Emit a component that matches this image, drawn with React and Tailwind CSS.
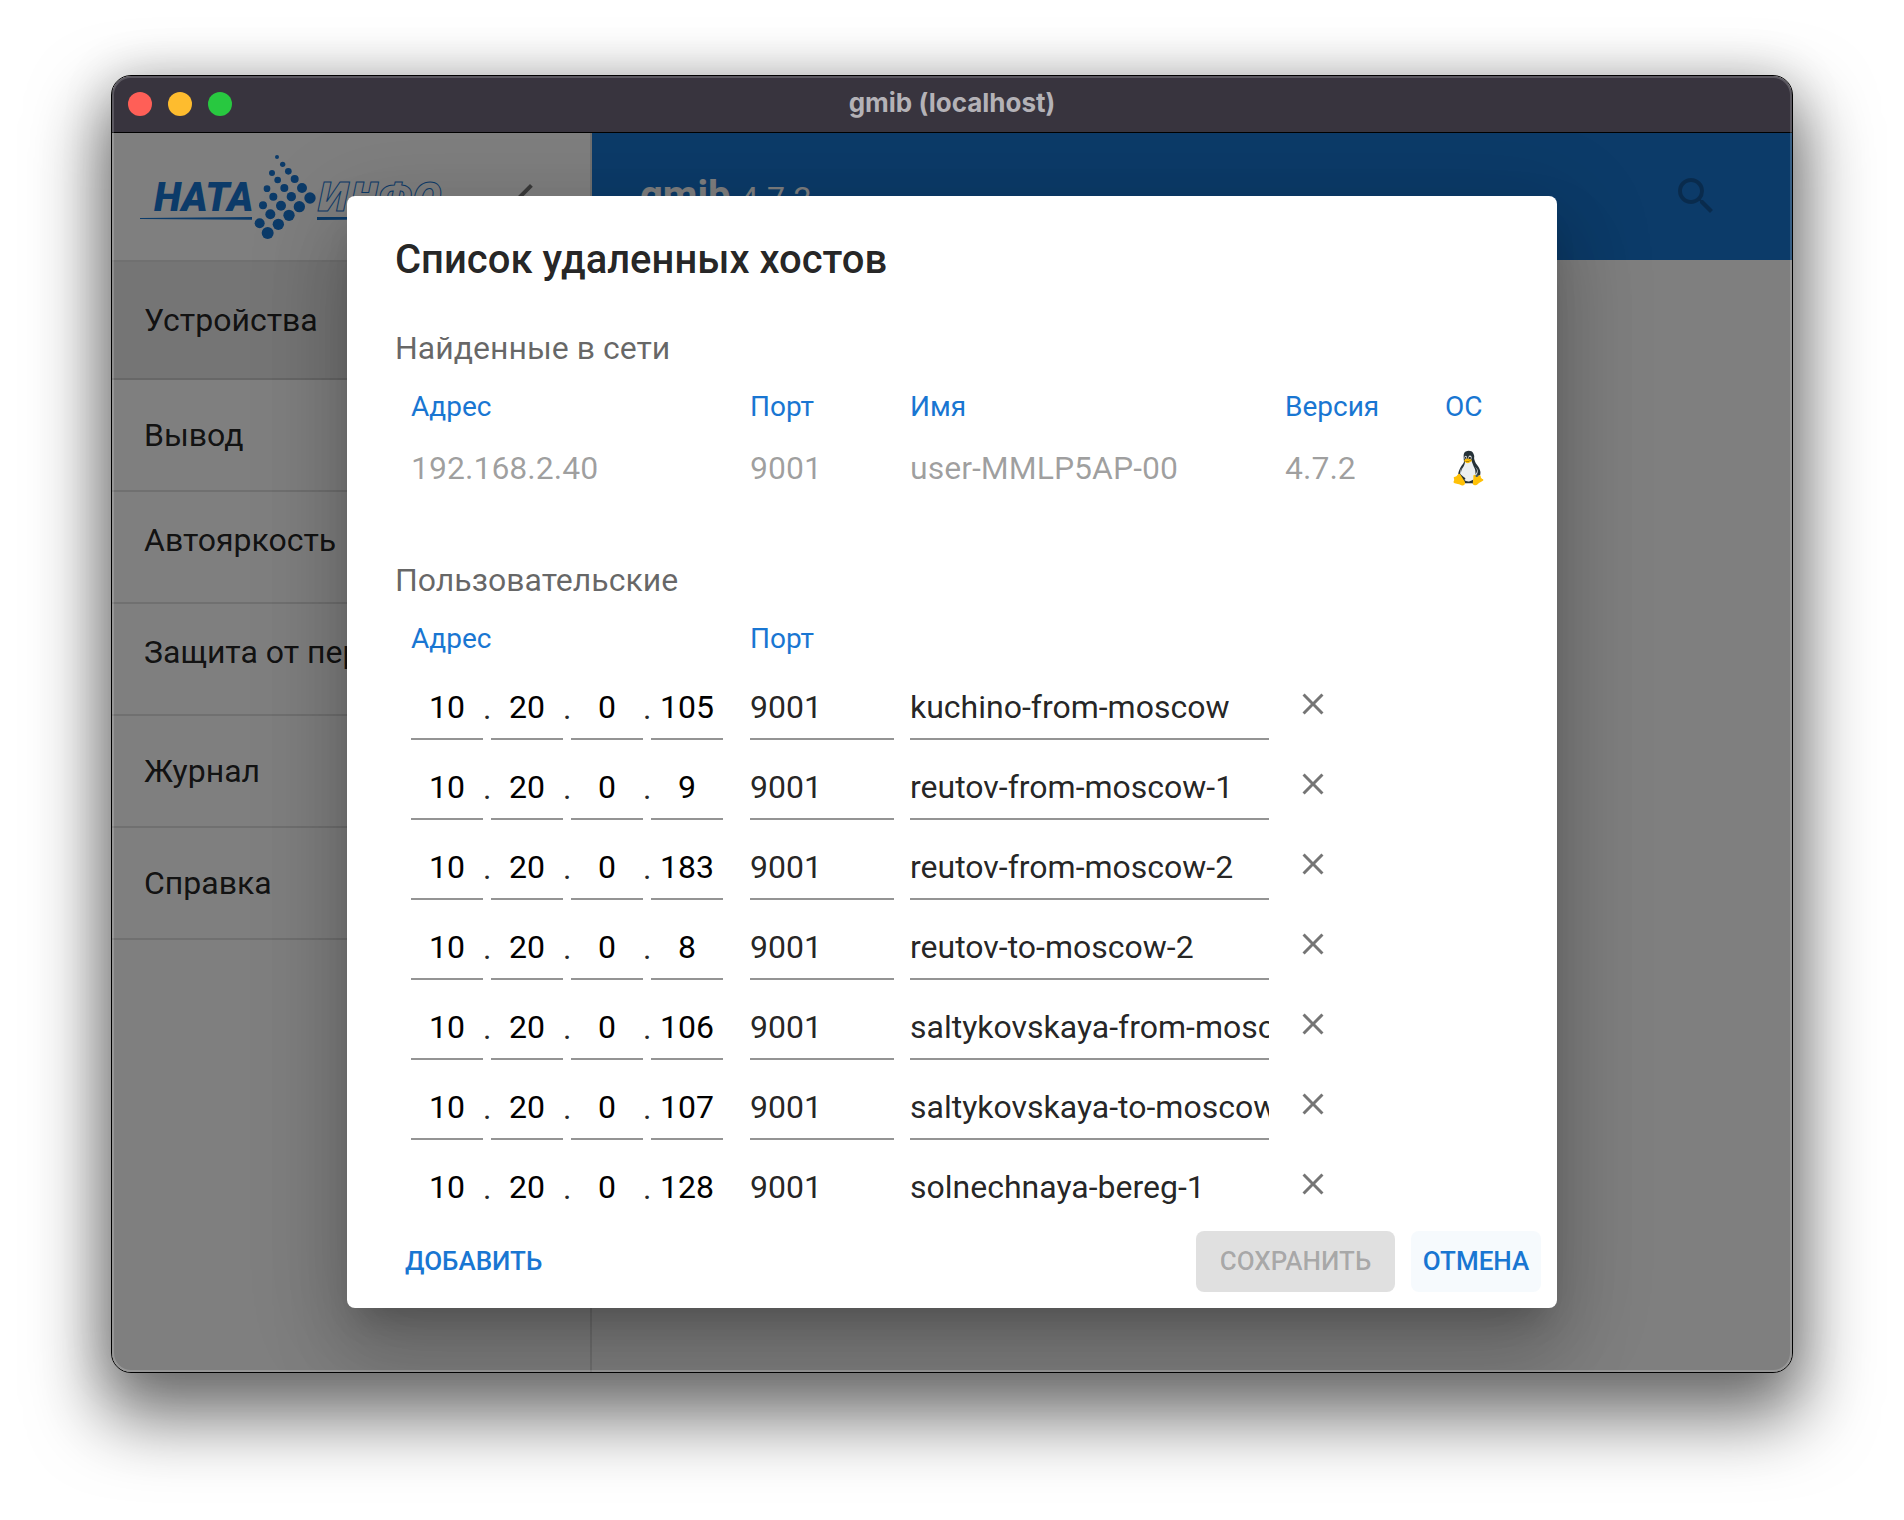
import React, { useState } from 'react';
import { MdChevronLeft, MdClose, MdSearch } from 'react-icons/md';
import { FcLinux } from 'react-icons/fc';

const MENU = [
  { title: 'Устройства', selected: true },
  { title: 'Вывод' },
  { title: 'Автояркость', raised: true },
  { title: 'Защита от перегрева', raised: true },
  { title: 'Журнал' },
  { title: 'Справка' },
];

const FOUND_HOSTS = [
  { address: '192.168.2.40', port: 9001, name: 'user-MMLP5AP-00', version: '4.7.2' },
];

const CUSTOM_HOSTS = [
  { id: 1, address: '10.20.0.105', port: '9001', name: 'kuchino-from-moscow' },
  { id: 2, address: '10.20.0.9', port: '9001', name: 'reutov-from-moscow-1' },
  { id: 3, address: '10.20.0.183', port: '9001', name: 'reutov-from-moscow-2' },
  { id: 4, address: '10.20.0.8', port: '9001', name: 'reutov-to-moscow-2' },
  { id: 5, address: '10.20.0.106', port: '9001', name: 'saltykovskaya-from-moscow' },
  { id: 6, address: '10.20.0.107', port: '9001', name: 'saltykovskaya-to-moscow' },
  { id: 7, address: '10.20.0.128', port: '9001', name: 'solnechnaya-bereg-1' },
];

// [cx, cy, r]
const LOGO_DOTS = [
  [441, 48, 6], [458, 70, 8], [475, 91, 10], [494, 114, 12], [516, 141, 15], [540, 171, 17],
  [426, 96, 9], [443, 117, 10], [463, 141, 12], [484, 167, 14], [508, 197, 17],
  [411, 143, 10], [430, 167, 12], [453, 194, 15], [477, 223, 17],
  [399, 193, 12], [421, 220, 15], [445, 250, 17],
  [389, 247, 15], [413, 276, 18],
];

function Logo() {
  return (
    <svg viewBox="30 30 990 270" className="w-[330px] h-[90px] shrink-0" fill="#1976d2" role="img" aria-label="НАТА-ИНФО">
      <text x="72" y="210" fontFamily="Roboto, sans-serif" fontSize="119" fontWeight="900" fontStyle="italic">НАТА</text>
      <path d="M30 231 L366 228 V236 L30 234 Z" />
      {LOGO_DOTS.map(([cx, cy, r]) => (
        <circle key={`${cx}-${cy}`} cx={cx} cy={cy} r={r} />
      ))}
      <text
        x="562"
        y="210"
        fontFamily="Open Sans, sans-serif"
        fontSize="121"
        fontWeight="800"
        fontStyle="italic"
        fill="none"
        stroke="#1976d2"
        strokeWidth="3"
      >
        ИНФО
      </text>
      <path d="M561 228 H960 V233 L561 237 Z" />
    </svg>
  );
}

function TitleBar() {
  return (
    <div className="relative z-10 grid grid-cols-[1fr_auto_1fr] items-center h-14 shrink-0 px-4 bg-[#38343e] shadow-[0_1px_0_#000]">
      <div className="flex gap-4">
        <button type="button" aria-label="Закрыть" className="size-6 rounded-full bg-[#ff5f57]" />
        <button type="button" aria-label="Свернуть" className="size-6 rounded-full bg-[#febc2e]" />
        <button type="button" aria-label="Развернуть" className="size-6 rounded-full bg-[#28c840]" />
      </div>
      <span className="pb-1 font-[Inter,sans-serif] text-[26px] font-bold text-[#b4b2b7]">gmib (localhost)</span>
    </div>
  );
}

function Sidebar() {
  return (
    <aside className="w-[480px] shrink-0 border-r-2 border-black/12">
      <div className="flex items-center justify-between h-[130px] pl-7 pr-10 border-b-2 border-black/12">
        <Logo />
        <button type="button" aria-label="Свернуть меню" className="text-black/54">
          <MdChevronLeft size={48} />
        </button>
      </div>
      <nav>
        {MENU.map(item => (
          <a
            key={item.title}
            href="#"
            className={`flex items-center px-8 text-[32px] leading-12 text-black/87 border-b-2 border-black/12 ${
              item.selected ? 'h-[118px] bg-black/8' : 'h-28'
            } ${item.raised ? 'pb-3.5' : ''}`}
          >
            <span className="truncate">{item.title}</span>
          </a>
        ))}
      </nav>
    </aside>
  );
}

function AppHeader() {
  return (
    <header className="flex items-center justify-between h-32 pl-12 pr-[72px] bg-[#1976d2] text-white">
      <h1 className="flex items-baseline gap-2.5 text-[40px] font-bold">
        gmib
        <span className="text-[32px] font-normal">4.7.2</span>
      </h1>
      <button type="button" disabled aria-label="Поиск" className="text-black/26">
        <MdSearch size={48} />
      </button>
    </header>
  );
}

function Columns() {
  return (
    <colgroup>
      <col className="w-[339px]" />
      <col className="w-40" />
      <col className="w-[375px]" />
      <col className="w-40" />
      <col />
    </colgroup>
  );
}

function HeadCell({ children }) {
  return <th scope="col" className="h-15 pt-0.5 pl-4 text-left text-[28px] font-normal text-[#1976d2]">{children}</th>;
}

function AddressField({ value, onChange }) {
  const parts = value.split('.');
  const setPart = (index, part) => onChange(parts.map((p, i) => (i === index ? part : p)).join('.'));

  return (
    <div className="flex items-center">
      {parts.map((part, i) => (
        <React.Fragment key={i}>
          {i > 0 && <span className="w-2 text-center">.</span>}
          <input
            type="text"
            aria-label={`Адрес, октет ${i + 1}`}
            value={part}
            onChange={e => setPart(i, e.target.value)}
            className="w-[72px] h-16 text-center text-black border-b-2 border-black/42 focus:outline-none"
          />
        </React.Fragment>
      ))}
    </div>
  );
}

function RemoteHostsDialog() {
  const [hosts, setHosts] = useState(CUSTOM_HOSTS);
  const [changed, setChanged] = useState(false);

  const updateHost = (id, props) => {
    setHosts(hosts.map(h => (h.id === id ? { ...h, ...props } : h)));
    setChanged(true);
  };

  const removeHost = (id) => {
    setHosts(hosts.filter(h => h.id !== id));
    setChanged(true);
  };

  const addHost = () => {
    setHosts([...hosts, { id: Date.now(), address: '...', port: '9001', name: '' }]);
    setChanged(true);
  };

  return (
    <div
      role="dialog"
      aria-labelledby="hosts-title"
      className="flex flex-col w-full max-w-[1210px] max-h-full rounded-lg bg-white text-black/87 shadow-[0_22px_30px_-14px_rgba(0,0,0,0.2),0_48px_76px_6px_rgba(0,0,0,0.14),0_18px_92px_16px_rgba(0,0,0,0.12)]"
    >
      <h2 id="hosts-title" className="px-12 pt-8 pb-7 text-[40px] leading-16 font-medium">
        Список удаленных хостов
      </h2>

      <div className="flex-1 min-h-0 px-12 overflow-y-auto [scrollbar-width:none]">
        <h3 className="text-[32px] leading-14 text-black/60">Найденные в сети</h3>
        <table className="w-full table-fixed mb-[52px]">
          <Columns />
          <thead>
            <tr>
              <HeadCell>Адрес</HeadCell>
              <HeadCell>Порт</HeadCell>
              <HeadCell>Имя</HeadCell>
              <HeadCell>Версия</HeadCell>
              <HeadCell>ОС</HeadCell>
            </tr>
          </thead>
          <tbody className="text-[32px] text-black/38">
            {FOUND_HOSTS.map(host => (
              <tr key={host.address} className="h-16">
                <td className="pl-4">{host.address}</td>
                <td className="pl-4">{host.port}</td>
                <td className="pl-4">{host.name}</td>
                <td className="pl-4">{host.version}</td>
                <td className="pl-4"><FcLinux size={46} /></td>
              </tr>
            ))}
          </tbody>
        </table>

        <h3 className="text-[32px] leading-14 text-black/60">Пользовательские</h3>
        <table className="w-full table-fixed">
          <Columns />
          <thead>
            <tr>
              <HeadCell>Адрес</HeadCell>
              <HeadCell>Порт</HeadCell>
              <td colSpan={3} />
            </tr>
          </thead>
          <tbody className="text-[32px]">
            {hosts.map(host => (
              <tr key={host.id} className="h-20">
                <td className="pl-4 pt-2 pb-2">
                  <AddressField value={host.address} onChange={address => updateHost(host.id, { address })} />
                </td>
                <td className="pl-4 pt-2 pb-2">
                  <input
                    type="text"
                    aria-label="Порт"
                    value={host.port}
                    onChange={e => updateHost(host.id, { port: e.target.value })}
                    className="block w-full h-16 border-b-2 border-black/42 focus:outline-none"
                  />
                </td>
                <td className="pl-4 pt-2 pb-2">
                  <input
                    type="text"
                    aria-label="Имя"
                    value={host.name}
                    onChange={e => updateHost(host.id, { name: e.target.value })}
                    className="block w-full h-16 border-b-2 border-black/42 focus:outline-none"
                  />
                </td>
                <td className="pl-[26px] pb-2">
                  <button
                    type="button"
                    aria-label="Удалить"
                    onClick={() => removeHost(host.id)}
                    className="block text-black/54"
                  >
                    <MdClose size={36} />
                  </button>
                </td>
                <td />
              </tr>
            ))}
          </tbody>
        </table>
      </div>

      <div className="flex items-center gap-4 p-4 text-[26px] leading-[45px] font-medium">
        <button type="button" onClick={addHost} className="px-2.5 py-2 ml-8 mr-auto rounded-lg text-[#1976d2]">
          ДОБАВИТЬ
        </button>
        <button
          type="button"
          disabled={!changed}
          className="min-w-[199px] px-4 py-2 rounded-lg bg-[#1976d2] text-white disabled:bg-black/12 disabled:text-black/26"
        >
          СОХРАНИТЬ
        </button>
        <button type="button" className="min-w-[130px] px-2.5 py-2 rounded-lg bg-[#1976d2]/4 text-[#1976d2]">
          ОТМЕНА
        </button>
      </div>
    </div>
  );
}

export default function App() {
  return (
    <div className="flex h-screen px-[111px] pt-[75px] pb-[147px] bg-white font-[Roboto,sans-serif]">
      <div className="relative flex flex-col flex-1 min-w-0 overflow-hidden rounded-[20px] border border-black bg-white shadow-[0_36px_70px_10px_rgba(0,0,0,0.55),0_0_50px_rgba(0,0,0,0.15)]">
        <TitleBar />
        <div className="relative flex flex-1 min-h-0">
          <Sidebar />
          <main className="flex-1 min-w-0">
            <AppHeader />
          </main>
          {/* Modal backdrop */}
          <div className="absolute inset-0 flex items-center justify-center p-16 bg-black/50">
            <RemoteHostsDialog />
          </div>
        </div>
        <div className="absolute inset-0 z-20 rounded-[19px] pointer-events-none shadow-[inset_0_0_0_2px_rgba(255,255,255,0.18)]" />
      </div>
    </div>
  );
}
